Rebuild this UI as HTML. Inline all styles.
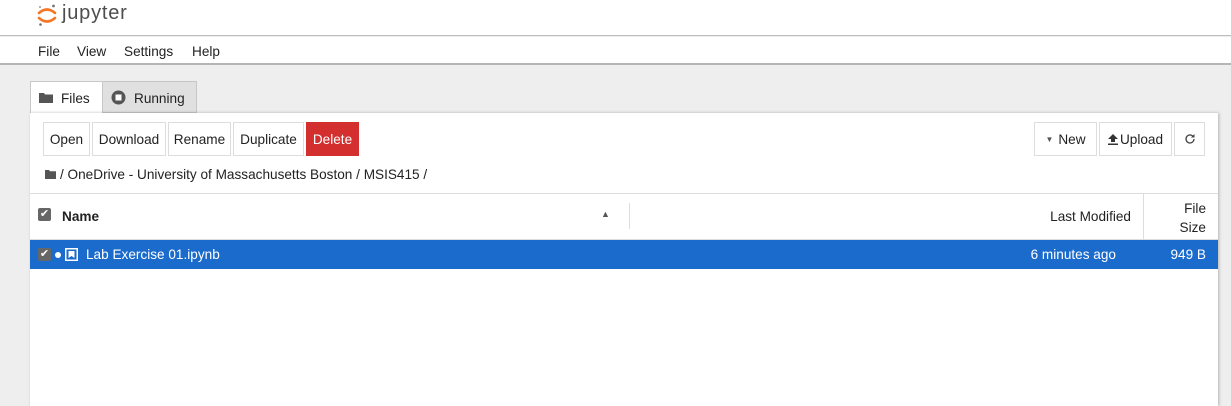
<!DOCTYPE html>
<html><head><style>
*{box-sizing:border-box;margin:0;padding:0}
body{width:1231px;height:406px;overflow:hidden;background:#eeeeee;font-family:"Liberation Sans",Arial,sans-serif;font-size:13.6px;color:#222;position:relative}
.abs{position:absolute}
.btn{position:absolute;top:122px;height:34px;border:1px solid #ddd;background:#fff;display:flex;align-items:center;justify-content:center;font-size:13.6px;color:#222}
.r{text-align:right}
</style></head><body>
<div class="abs" style="left:0;top:0;width:1231px;height:36px;background:#fff;border-bottom:1px solid #bdbdbd"></div>
<svg class="abs" style="left:36px;top:3px" width="22" height="24" viewBox="0 0 22 24">
<path d="M3 10 Q11 3 19 10" fill="none" stroke="#f37726" stroke-width="2.6" stroke-linecap="round"/>
<path d="M3 15 Q11 22 19 15" fill="none" stroke="#f37726" stroke-width="2.6" stroke-linecap="round"/>
<circle cx="17.5" cy="3" r="1.4" fill="#767677"/><circle cx="4" cy="4" r="1" fill="#989798"/><circle cx="4.5" cy="21.5" r="1.3" fill="#6f7070"/>
</svg>
<div class="abs" style="left:62px;top:2px;font-size:20px;color:#4e4e4e;letter-spacing:0.8px">jupyter</div>
<div class="abs" style="left:0;top:37px;width:1231px;height:28px;background:#fff;border-bottom:2px solid #b5b5b5"></div>
<div class="abs" style="left:38px;top:44px">File</div>
<div class="abs" style="left:77px;top:44px">View</div>
<div class="abs" style="left:124px;top:44px">Settings</div>
<div class="abs" style="left:192px;top:44px">Help</div>
<div class="abs" style="left:30px;top:81px;width:73px;height:33px;background:#fff;border:1px solid #c7c7c7;border-bottom:none"></div>
<div class="abs" style="left:102px;top:81px;width:95px;height:32px;background:#e0e0e0;border:1px solid #c7c7c7"></div>
<svg class="abs" style="left:39px;top:92px" width="14" height="11" viewBox="0 0 14 11"><path d="M0 1h5l1 1.5h8V11H0Z" fill="#555"/></svg>
<div class="abs" style="left:61px;top:91px">Files</div>
<svg class="abs" style="left:111px;top:90px" width="15" height="15" viewBox="0 0 15 15"><circle cx="7.5" cy="7.5" r="7" fill="#555"/><rect x="4.5" y="4.5" width="6" height="6" fill="#fff"/></svg>
<div class="abs" style="left:134px;top:91px">Running</div>
<div class="abs" style="left:30px;top:113px;width:1188px;height:293px;background:#fff;box-shadow:1px 0 3px rgba(0,0,0,.25)"></div>
<div class="btn" style="left:43px;width:47px">Open</div>
<div class="btn" style="left:92px;width:74px">Download</div>
<div class="btn" style="left:168px;width:63px">Rename</div>
<div class="btn" style="left:233px;width:71px">Duplicate</div>
<div class="btn" style="left:306px;width:53px;background:#d32f2f;border-color:#d32f2f;color:#fff">Delete</div>
<div class="btn" style="left:1034px;width:63px"><span style="font-size:8px;color:#555;margin-right:5px">▼</span>New</div>
<div class="btn" style="left:1099px;width:73px"><svg width="10" height="11" viewBox="0 0 10 11" style="margin-right:2px"><path d="M5 0L10 5H7v3H3V5H0Z M0 9.5h10v1.5H0Z" fill="#333"/></svg>Upload</div>
<div class="btn" style="left:1174px;width:31px"><svg width="12" height="12" viewBox="0 0 12 12"><path d="M10 6a4 4 0 1 1-1.2-2.9" fill="none" stroke="#444" stroke-width="1.3"/><path d="M10.5 1v3.5H7Z" fill="#444"/></svg></div>
<svg class="abs" style="left:45px;top:170px" width="11" height="9" viewBox="0 0 11 9"><path d="M0 0h4l1 1.2h6V9H0Z" fill="#555"/></svg>
<div class="abs" style="left:60px;top:167px">/ OneDrive - University of Massachusetts Boston / MSIS415 /</div>
<div class="abs" style="left:30px;top:193px;width:1188px;height:1px;background:#ddd"></div>
<div class="abs" style="left:38px;top:208px;width:13px;height:13px;background:#666;border-radius:2px;color:#fff;font-size:11px;line-height:13px;text-align:center">✔</div>
<div class="abs" style="left:62px;top:209px;font-weight:bold">Name</div>
<div class="abs" style="left:601px;top:209px;font-size:9px;color:#555">▲</div>
<div class="abs" style="left:629px;top:203px;width:1px;height:26px;background:#ddd"></div>
<div class="abs r" style="left:931px;width:200px;top:209px">Last Modified</div>
<div class="abs" style="left:1143px;top:193px;width:1px;height:47px;background:#ddd"></div>
<div class="abs r" style="left:1150px;top:199px;width:56px;line-height:19px">File<br>Size</div>
<div class="abs" style="left:30px;top:239px;width:1188px;height:1px;background:#ddd"></div>
<div class="abs" style="left:30px;top:240px;width:1188px;height:29px;background:#1a6bcc"></div>
<div class="abs" style="left:38px;top:248px;width:13px;height:13px;background:#666;border-radius:2px;color:#fff;font-size:11px;line-height:13px;text-align:center">✔</div>
<div class="abs" style="left:55px;top:252px;width:6px;height:6px;border-radius:50%;background:#fff"></div>
<svg class="abs" style="left:65px;top:248px" width="13" height="13" viewBox="0 0 13 13"><rect x="0.75" y="0.75" width="11.5" height="11.5" fill="none" stroke="#fff" stroke-width="1.5"/><path d="M3.5 3h6v7L6.5 8 3.5 10Z" fill="#fff"/></svg>
<div class="abs" style="left:86px;top:247px;color:#fff">Lab Exercise 01.ipynb</div>
<div class="abs r" style="left:916px;width:200px;top:247px;color:#fff">6 minutes ago</div>
<div class="abs r" style="left:1150px;top:247px;width:56px;color:#fff">949 B</div>
</body></html>
